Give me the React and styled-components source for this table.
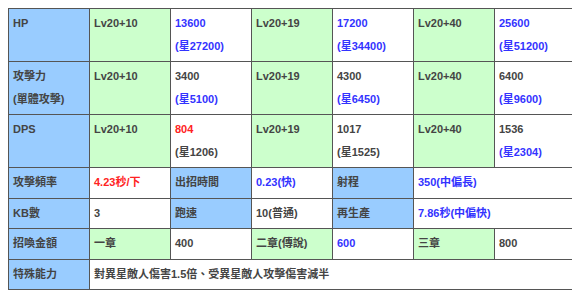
import React from "react";
import styled, { createGlobalStyle } from "styled-components";

const GlobalStyle = createGlobalStyle`
  body {
    margin: 8px;
    background: #ffffff;
    font-family: "Liberation Sans", "Noto Sans CJK TC", sans-serif;
  }
`;

const StatTable = styled.table`
  width: 567px;
  table-layout: fixed;
  border-collapse: collapse;
  outline: 1px solid #aaaaaa;
  font-size: 11px;
  font-weight: bold;
  color: #444444;
`;

const Col = styled.col`
  width: 81px;
`;

const bg = {
  head: "#99ccff",
  lv: "#ccffcc",
  val: "#ffffff",
};

const Cell = styled.td`
  background: ${(p) => bg[p.$kind || "val"]};
  border: 1px solid #555555;
  padding: 3px 4px 4px;
  line-height: 22.5px;
  vertical-align: top;
  white-space: nowrap;
  overflow: hidden;
`;

const tone = {
  blue: "#3333ff",
  red: "#ff2222",
  gray: "#444444",
};

const Txt = styled.span`
  display: block;
  color: ${(p) => tone[p.$tone || "gray"]};
`;

const levels = [
  {
    name: "HP",
    cols: [
      ["Lv20+10", "13600", "blue", "(星27200)", "blue"],
      ["Lv20+19", "17200", "blue", "(星34400)", "blue"],
      ["Lv20+40", "25600", "blue", "(星51200)", "blue"],
    ],
  },
  {
    name: ["攻擊力", "(單體攻擊)"],
    cols: [
      ["Lv20+10", "3400", "gray", "(星5100)", "blue"],
      ["Lv20+19", "4300", "gray", "(星6450)", "blue"],
      ["Lv20+40", "6400", "gray", "(星9600)", "blue"],
    ],
  },
  {
    name: "DPS",
    cols: [
      ["Lv20+10", "804", "red", "(星1206)", "gray"],
      ["Lv20+19", "1017", "gray", "(星1525)", "gray"],
      ["Lv20+40", "1536", "gray", "(星2304)", "blue"],
    ],
  },
];

const LevelRow = ({ row }) => (
  <tr>
    <Cell $kind="head">
      {[].concat(row.name).map((n) => (
        <Txt key={n}>{n}</Txt>
      ))}
    </Cell>
    {row.cols.map(([lv, a, at, b, bt]) => (
      <React.Fragment key={lv}>
        <Cell $kind="lv">{lv}</Cell>
        <Cell>
          <Txt $tone={at}>{a}</Txt>
          <Txt $tone={bt}>{b}</Txt>
        </Cell>
      </React.Fragment>
    ))}
  </tr>
);

export default function App() {
  return (
    <>
      <GlobalStyle />
      <StatTable>
        <colgroup>
          {Array.from({ length: 7 }).map((_, i) => (
            <Col key={i} />
          ))}
        </colgroup>
        <tbody>
          {levels.map((row, i) => (
            <LevelRow key={i} row={row} />
          ))}
          <tr>
            <Cell $kind="head">攻擊頻率</Cell>
            <Cell><Txt $tone="red">4.23秒/下</Txt></Cell>
            <Cell $kind="head">出招時間</Cell>
            <Cell><Txt $tone="blue">0.23(快)</Txt></Cell>
            <Cell $kind="head">射程</Cell>
            <Cell colSpan={2}><Txt $tone="blue">350(中偏長)</Txt></Cell>
          </tr>
          <tr>
            <Cell $kind="head">KB數</Cell>
            <Cell>3</Cell>
            <Cell $kind="head">跑速</Cell>
            <Cell>10(普通)</Cell>
            <Cell $kind="head">再生產</Cell>
            <Cell colSpan={2}><Txt $tone="blue">7.86秒(中偏快)</Txt></Cell>
          </tr>
          <tr>
            <Cell $kind="head">招喚金額</Cell>
            <Cell $kind="lv">一章</Cell>
            <Cell>400</Cell>
            <Cell $kind="lv">二章(傳說)</Cell>
            <Cell><Txt $tone="blue">600</Txt></Cell>
            <Cell $kind="lv">三章</Cell>
            <Cell>800</Cell>
          </tr>
          <tr>
            <Cell $kind="head">特殊能力</Cell>
            <Cell colSpan={6}>對異星敵人傷害1.5倍、受異星敵人攻擊傷害減半</Cell>
          </tr>
        </tbody>
      </StatTable>
    </>
  );
}
